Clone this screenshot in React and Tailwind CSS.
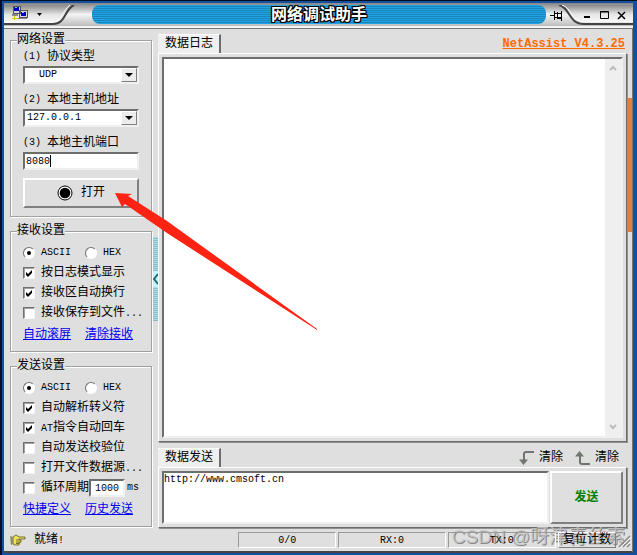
import React, { useState } from 'react';

const sunken = 'border-2 border-t-[#6d6d6d] border-l-[#6d6d6d] border-r-[#f0f0f0] border-b-[#f0f0f0] bg-white';
const raised = 'border-2 border-t-white border-l-white border-r-[#808080] border-b-[#808080] bg-[#dfdfdf]';

// latin text is set smaller so that two letters fill one chinese cell
function Mono({ children, className = '' }) {
    return <span className={`text-[10px] whitespace-pre ${className}`}>{children}</span>;
}

function Group({ title, children }) {
    return (
        <fieldset className="min-w-0 border border-[#a0a0a0] px-3 shadow-[1px_1px_0_#fff,inset_1px_1px_0_#fff]">
            <legend className="-ml-1.5 bg-[#dfdfdf] leading-3">{title}</legend>
            {children}
        </fieldset>
    );
}

function Check({ label, defaultChecked = false }) {
    return (
        <label className="flex h-5 items-center gap-1.5 whitespace-nowrap">
            <span className="grid shrink-0">
                <input
                    type="checkbox"
                    defaultChecked={defaultChecked}
                    className="peer col-start-1 row-start-1 size-3 appearance-none border border-t-[#707070] border-l-[#707070] border-r-[#f4f4f4] border-b-[#f4f4f4] bg-white shadow-[inset_1px_1px_0_#a0a0a0]"
                />
                <svg viewBox="0 0 12 12" className="pointer-events-none col-start-1 row-start-1 hidden size-3 peer-checked:block">
                    <path d="M3 5l2 2 4-4v3L5 10 3 8z" fill="#000" />
                </svg>
            </span>
            <span className="leading-[14px]">{label}</span>
        </label>
    );
}

function Radio({ name, label, defaultChecked = false }) {
    return (
        <label className="flex h-5 items-center gap-1.5">
            <span className="grid shrink-0">
                <input
                    type="radio"
                    name={name}
                    defaultChecked={defaultChecked}
                    className="peer col-start-1 row-start-1 size-3 appearance-none rounded-full border border-t-[#707070] border-l-[#707070] border-r-white border-b-white bg-white"
                />
                <span className="pointer-events-none col-start-1 row-start-1 hidden size-1 place-self-center rounded-full bg-black peer-checked:block" />
            </span>
            <Mono>{label}</Mono>
        </label>
    );
}

function FormatRadios({ name }) {
    return (
        <div className="flex gap-3.5 pt-1.5">
            <Radio name={name} label="ASCII" defaultChecked />
            <Radio name={name} label="HEX" />
        </div>
    );
}

function Links({ items }) {
    return (
        <div className="flex gap-3.5 pt-1 pb-2">
            {items.map((item) => (
                <a key={item} href="#" className="text-[#0000f0] underline leading-4">{item}</a>
            ))}
        </div>
    );
}

function FieldLabel({ htmlFor, number, children }) {
    return (
        <label htmlFor={htmlFor} className="flex h-[14px] items-center">
            <Mono>{`(${number}) `}</Mono>
            {children}
        </label>
    );
}

function DropDown({ id, number, label, options, indent = false }) {
    return (
        <div className="mb-[9px] flex flex-col gap-0.5">
            <FieldLabel htmlFor={id} number={number}>{label}</FieldLabel>
            <div className={`grid ${sunken}`}>
                <select
                    id={id}
                    className={`col-start-1 row-start-1 h-[14px] w-full appearance-none bg-white text-[10px] leading-[14px] outline-none ${indent ? 'pl-3.5' : 'pl-0.5'}`}
                >
                    {options.map((option) => <option key={option}>{option}</option>)}
                </select>
                <span className="pointer-events-none col-start-1 row-start-1 flex w-4 items-center justify-center justify-self-end border border-t-white border-l-white border-r-[#808080] border-b-[#808080] bg-[#ececec]">
                    <svg viewBox="0 0 8 4" className="h-1 w-2"><path d="M0 0h8L4 4z" /></svg>
                </span>
            </div>
        </div>
    );
}

function TitleBar() {
    return (
        <header className="flex h-[25px] border-b-2 border-[#f4f4f4] bg-linear-to-b from-[#858585] via-[#f4f4f4] to-[#bdbdbd] pt-0.5">
            <div className="relative h-[22px] w-[88px] shrink-0">
                <svg viewBox="0 0 88 22" className="absolute inset-0 size-full">
                    <defs>
                        <linearGradient id="metal" x2="0" y2="1">
                            <stop offset="0" stopColor="#8a8a8a" />
                            <stop offset=".55" stopColor="#e6e6e6" />
                            <stop offset="1" stopColor="#f7f7f7" />
                        </linearGradient>
                    </defs>
                    <path d="M0 0H69C60 5 62 18 49 18H0z" fill="url(#metal)" />
                    <path d="M0 19H49C62 19 60 5 70 0" fill="none" stroke="#444" strokeWidth="2" />
                    <path d="M0 17H48C58 17 58 6 66 0" fill="none" stroke="#fff" strokeWidth="1" />
                    <g shapeRendering="crispEdges">
                        <path d="M9 1h7v7H9zM15 5h8v7h-8z" fill="#d8d8d8" stroke="#555" />
                        <path d="M10 2h5v4h-5zM17 7h5v4h-5z" fill="#0000c8" />
                        <path d="M11 2h2v1h-2zM18 7h2v1h-2z" fill="#6ad0ff" />
                        <path d="M8 9h6v2H8zM14 13h9v1h-9z" fill="#888" />
                        <path d="M10 11h1v2h3v1h-3v1h-1v-1H8v-1h2z" fill="#d8c800" />
                    </g>
                    <path d="M33 8h5l-2.500 3z" />
                </svg>
            </div>
            <h1 className="h-[19px] min-w-0 flex-1 rounded-lg bg-[repeating-linear-gradient(180deg,#1ca4e4_0px,#1ca4e4_1px,#1c84b8_1px,#1c84b8_2px)] text-center text-[16px] leading-[22px] font-bold text-white [text-shadow:1px_0_#000,-1px_0_#000,0_1px_#000,0_-1px_#000,1px_1px_#000,-1px_-1px_#000,1px_-1px_#000,-1px_1px_#000]">
                网络调试助手
            </h1>
            <div className="relative flex h-[21px] w-[87px] shrink-0 items-center">
                <svg viewBox="0 0 87 21" className="absolute inset-0 size-full">
                    <path d="M13 0C24 2 22 17 38 17H87V0z" fill="url(#metal)" />
                    <path d="M13 0C24 2 22 19 38 19H87" fill="none" stroke="#444" strokeWidth="2" />
                    <path d="M16 0C26 3 25 17 39 17H87" fill="none" stroke="#fff" />
                </svg>
                <button aria-label="Pin" className="relative ml-1 h-4 w-4">
                    <svg viewBox="0 0 16 16" className="size-4" fill="none" stroke="#000" shapeRendering="crispEdges">
                        <path d="M0 7.500h4M4.500 3v9M5 5.500h2M5 9.500h2M7.500 4v7M7 5.500h5M7 9.500h5M7 10.500h5M11.500 3v10" />
                    </svg>
                </button>
                <button aria-label="Minimize" className="relative ml-3.5 h-4 w-3">
                    <svg viewBox="0 0 12 16"><path d="M4 8h6v2H4z" /></svg>
                </button>
                <button aria-label="Maximize" className="relative ml-1.5 h-4 w-3">
                    <svg viewBox="0 0 12 16"><path d="M2.500 3.500h8v7h-8zM2 4h9" fill="none" stroke="#000" /></svg>
                </button>
                <button aria-label="Close" className="relative ml-1.5 h-4 w-3">
                    <svg viewBox="0 0 12 16"><path d="M2 4l7 7M9 4l-7 7" fill="none" stroke="#000" strokeWidth="1.500" /></svg>
                </button>
            </div>
        </header>
    );
}

function Tab({ children }) {
    return (
        <span className="flex h-5 items-center border-t border-r-2 border-t-white border-r-[#6d6d6d] bg-[#efefef] pr-1.5 pl-[7px]">
            {children}
        </span>
    );
}

function ClearButton({ up = false }) {
    return (
        <button className="flex items-center gap-1">
            <svg viewBox="0 0 16 16" className={`size-4 ${up ? 'rotate-180 -scale-x-100' : ''}`}>
                <path d="M15 2H7Q5 2 5 4V11" fill="none" stroke="#707570" strokeWidth="2" />
                <path d="M0 9.500h9L4.500 15z" fill="#707570" />
            </svg>
            清除
        </button>
    );
}

function StatusCell({ children, className }) {
    return (
        <div className={`mr-0.5 h-4 border border-t-[#9a9a9a] border-l-[#9a9a9a] border-r-white border-b-white text-center leading-[14px] ${className}`}>
            <Mono>{children}</Mono>
        </div>
    );
}

const panel = 'flex border border-t-white border-l-white border-r-[#6d6d6d] border-b-[#6d6d6d] p-[3px] shadow-[1px_1px_0_#909090]';

function App() {
    const [log, setLog] = useState('');
    const [message, setMessage] = useState('http://www.cmsoft.cn');
    const [port, setPort] = useState('8080');

    return (
        <div className="relative flex min-h-screen flex-col overflow-hidden border-t border-l-2 border-[#04101f] bg-[#dfdfdf] font-['Liberation_Mono','Noto_Sans_CJK_SC',monospace] text-[12px] leading-3 text-black">
            <div className="flex flex-1 flex-col border-t-2 border-r-4 border-b-2 border-l-2 border-[#1450a0]">
                <TitleBar />

                <div className="flex flex-1 border-t border-r border-[#777]">
                    <aside className="flex w-[148px] shrink-0 flex-col gap-2 pt-[5px] pl-1.5">
                        <Group title="网络设置">
                            <div className="pt-1 pb-2">
                                <DropDown id="protocol" number={1} label="协议类型" options={['UDP', 'TCP Client', 'TCP Server']} indent />
                                <DropDown id="host" number={2} label="本地主机地址" options={['127.0.0.1']} />
                                <div className="flex flex-col gap-0.5">
                                    <FieldLabel htmlFor="port" number={3}>本地主机端口</FieldLabel>
                                    <div className="relative">
                                        <input
                                            id="port"
                                            value={port}
                                            onChange={(e) => setPort(e.target.value)}
                                            className={`block h-[18px] w-full pl-px text-[10px] leading-[14px] outline-none ${sunken}`}
                                        />
                                        <span className="absolute top-[3px] left-[27px] h-3 w-px bg-black" />
                                    </div>
                                </div>
                                <button className={`mt-2 flex h-[30px] w-full items-center justify-center gap-2 ${raised}`}>
                                    <svg viewBox="0 0 16 16" className="size-4">
                                        <circle cx="8" cy="8" r="7" fill="#fff" stroke="#000" />
                                        <circle cx="8" cy="8" r="5.300" />
                                    </svg>
                                    打开
                                </button>
                            </div>
                        </Group>

                        <Group title="接收设置">
                            <FormatRadios name="recv" />
                            <Check label="按日志模式显示" defaultChecked />
                            <Check label="接收区自动换行" defaultChecked />
                            <Check label={<>接收保存到文件<Mono>...</Mono></>} />
                            <Links items={['自动滚屏', '清除接收']} />
                        </Group>

                        <Group title="发送设置">
                            <FormatRadios name="send" />
                            <Check label="自动解析转义符" defaultChecked />
                            <Check label={<><Mono>AT</Mono>指令自动回车</>} defaultChecked />
                            <Check label="自动发送校验位" />
                            <Check label={<>打开文件数据源<Mono>...</Mono></>} />
                            <div className="flex items-center">
                                <Check label="循环周期" />
                                <input aria-label="循环周期 ms" defaultValue="1000" className={`h-[18px] w-9 px-1 text-[10px] ${sunken}`} />
                                <Mono className="pl-0.5">ms</Mono>
                            </div>
                            <Links items={['快捷定义', '历史发送']} />
                        </Group>
                    </aside>

                    <div className="flex w-1.5 shrink-0 flex-col justify-center pl-px">
                        <button aria-label="Collapse" className="flex h-[84px] items-center bg-[repeating-linear-gradient(180deg,#a9dde8_0px,#a9dde8_1px,#8fb9c4_1px,#8fb9c4_2px)]">
                            <svg viewBox="0 0 5 16" className="h-4 w-[5px] bg-[#c0f4ff]">
                                <path d="M5 3L1 8l4 5" fill="none" stroke="#1f6670" strokeWidth="2" />
                            </svg>
                        </button>
                    </div>

                    <main className="flex min-w-0 flex-1 flex-col pt-[5px]">
                        <div className="flex h-[19px] items-center justify-between pr-0.5">
                            <Tab>数据日志</Tab>
                            <a href="#" className="text-[12px] font-bold text-[#ff6a00] underline">NetAssist V4.3.25</a>
                        </div>
                        <div className={`flex-1 ${panel}`}>
                            <div className={`flex flex-1 ${sunken}`}>
                                <textarea
                                    aria-label="数据日志"
                                    value={log}
                                    onChange={(e) => setLog(e.target.value)}
                                    className="min-w-0 flex-1 resize-none outline-none"
                                />
                                <div className="flex w-4 flex-col items-center justify-between bg-[#efefef] py-1.5">
                                    <svg viewBox="0 0 8 6" className="h-1.5 w-2"><path d="M1 5l3-3 3 3" fill="none" stroke="#bcbcbc" strokeWidth="2" /></svg>
                                    <svg viewBox="0 0 8 6" className="h-1.5 w-2"><path d="M1 1l3 3 3-3" fill="none" stroke="#bcbcbc" strokeWidth="2" /></svg>
                                </div>
                            </div>
                        </div>

                        <div className="mt-1.5 flex h-[19px] items-center justify-between">
                            <Tab>数据发送</Tab>
                            <div className="flex items-center gap-3 pr-2">
                                <ClearButton />
                                <ClearButton up />
                            </div>
                        </div>
                        <div className={`h-[61px] gap-px ${panel}`}>
                            <textarea
                                aria-label="数据发送"
                                value={message}
                                onChange={(e) => setMessage(e.target.value)}
                                className={`min-w-0 flex-1 resize-none text-[10px] leading-[14px] outline-none ${sunken}`}
                            />
                            <button className={`w-[73px] font-bold text-[#008000] ${raised}`}>发送</button>
                        </div>
                    </main>

                    <div className="w-[5px] shrink-0 pt-[69px] pl-px">
                        <div className="h-[134px] bg-[#e08040]" />
                    </div>
                </div>

                {/* status texts stay readable above the watermark */}
                <footer className="relative z-10 flex items-center border-r border-b-2 border-r-[#777] border-b-[#444] pt-1 pb-[3px]">
                    <div className="flex w-[234px] shrink-0 items-center gap-2 pl-1.5">
                        <svg viewBox="0 0 16 12" className="h-3 w-4">
                            <path d="M3 3l3-2 3 2h6v2H9v1h2v2h-1v1H9v2H5l-2-1z" fill="#f0e060" stroke="#5c5618" strokeWidth=".8" />
                            <path d="M9 6H6M10 8H6M9 9.500H6" stroke="#5c5618" strokeWidth=".8" />
                            <path d="M0 2l3 1v7l-2 1z" fill="#8c8c70" />
                        </svg>
                        <span>就绪<Mono>!</Mono></span>
                    </div>
                    <StatusCell className="flex-[98]">0/0</StatusCell>
                    <StatusCell className="flex-[107]">RX:0</StatusCell>
                    <StatusCell className="flex-[108]">TX:0</StatusCell>
                    <button className="h-4 w-[58px] border border-t-white border-l-white border-r-[#808080] border-b-[#808080]">复位计数</button>
                    <svg viewBox="0 0 16 16" className="size-4 self-end">
                        <path d="M3 15L14 4M7 15l7-7M11 15l3-3" stroke="#888" strokeWidth="1.500" />
                        <path d="M4.500 15.500L15 5M8.500 15.500L15 9" stroke="#fff" />
                    </svg>
                </footer>
            </div>

            <svg className="pointer-events-none absolute top-[190px] left-[110px] h-[140px] w-[206px]" viewBox="112 191 206 140">
                <path d="M115 193L132 194 128 196 167 221 317 329 317 330 167 233 125 204 122 207z" fill="#ff2314" />
            </svg>

            <span className="pointer-events-none absolute right-3 bottom-1.5 font-['Liberation_Sans','Noto_Sans_CJK_SC',sans-serif] text-[19px] leading-6 whitespace-nowrap text-[#c8c8c8]/80 [text-shadow:1px_1px_#888]">
                CSDN @呀津青丝索
            </span>
        </div>
    );
}

export default App;
